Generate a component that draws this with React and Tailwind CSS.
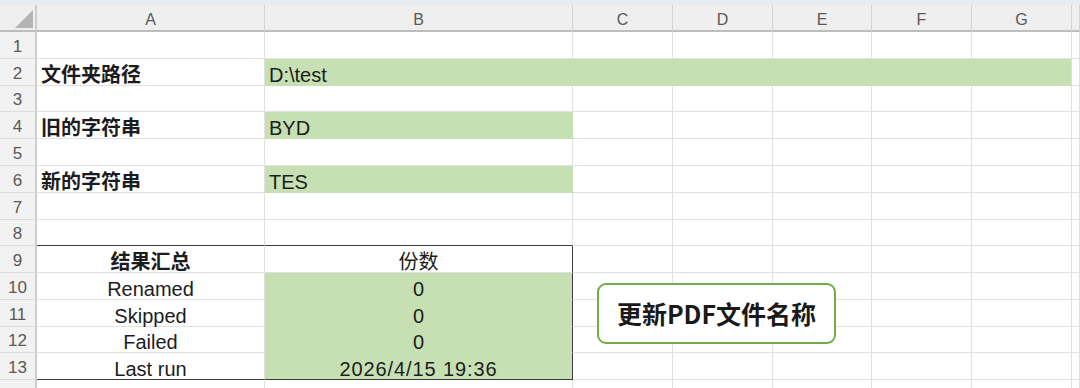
const FONT = { fontFamily: '"Liberation Sans", "Noto Sans CJK SC", sans-serif' };

const COLS = ['A', 'B', 'C', 'D', 'E', 'F', 'G', ''];

const GREEN = 'bg-[#c6e0b4]';

// one entry per sheet row
const rows = [
  { n: 1 },
  { n: 2, a: { text: '文件夹路径', bold: true }, b: { text: 'D:\\test', fill: true, span: 6 } },
  { n: 3 },
  { n: 4, a: { text: '旧的字符串', bold: true }, b: { text: 'BYD', fill: true } },
  { n: 5 },
  { n: 6, a: { text: '新的字符串', bold: true }, b: { text: 'TES', fill: true } },
  { n: 7 },
  { n: 8, top: true },
  { n: 9, table: true, a: { text: '结果汇总', bold: true, center: true }, b: { text: '份数', center: true } },
  { n: 10, table: true, a: { text: 'Renamed', center: true }, b: { text: '0', fill: true, center: true } },
  { n: 11, table: true, a: { text: 'Skipped', center: true }, b: { text: '0', fill: true, center: true } },
  { n: 12, table: true, a: { text: 'Failed', center: true }, b: { text: '0', fill: true, center: true } },
  {
    n: 13,
    table: true,
    bottom: true,
    a: { text: 'Last run', center: true },
    b: { text: '2026/4/15 19:36', fill: true, center: true, wide: true },
  },
  { n: 14, hidden: true },
];

function Cell({ cell = {}, right, bottom, span }) {
  return (
    <div
      className={`flex items-end overflow-visible whitespace-nowrap border-r border-b text-[20px] leading-none text-[#1c1c1c] ${right} ${bottom} ${
        cell.fill ? GREEN : 'bg-white'
      } ${cell.center ? 'justify-center' : 'pl-[4px]'} ${cell.bold ? 'font-bold' : ''} ${
        cell.wide ? 'tracking-[0.9px]' : ''
      } ${span === 6 ? 'col-span-6' : ''}`}
    >
      {cell.text}
    </div>
  );
}

function SheetRow({ row }) {
  const { a, b, table, top, bottom } = row;
  const aBottom = top || bottom ? 'border-b-[#3d3d3d]' : 'border-b-[#e1e1e1]';
  let bRight = 'border-r-[#e1e1e1]';
  if (table) bRight = 'border-r-[#3d3d3d]';
  else if (b && b.fill && !b.span) bRight = 'border-r-[#c6e0b4]';
  let bBottom = 'border-b-[#e1e1e1]';
  if (top || bottom) bBottom = 'border-b-[#3d3d3d]';
  else if (b && b.fill) bBottom = 'border-b-[#c6e0b4]';
  const rest = b && b.span ? COLS.slice(7) : COLS.slice(2);

  return (
    <>
      <div className="flex items-end justify-center border-r-2 border-b border-r-[#cdcdcd] border-b-[#dcdcdc] bg-[#f2f2f2] pb-[3px] text-[17px] leading-none text-[#595959]">
        {row.hidden ? '' : row.n}
      </div>
      <Cell cell={a} right="border-r-[#e1e1e1]" bottom={aBottom} />
      <Cell cell={b} right={bRight} bottom={bBottom} span={b && b.span} />
      {rest.map((c) => (
        <div key={c || 'h'} className="border-r border-b border-r-[#e1e1e1] border-b-[#e1e1e1] bg-white" />
      ))}
    </>
  );
}

export default function App() {
  return (
    <div className="relative h-[388px] w-[1080px] overflow-hidden bg-white" style={FONT}>
      <div className="h-[5px] bg-[#e8ecf0]" />
      <div className="grid grid-cols-[37px_228px_308px_100px_100px_99px_100px_100px_8px] grid-rows-[27px_27px_27px_26px_27px_27px_27px_27px_26px_27px_27px_27px_26px_27px_27px]">
        <div className="flex items-start border-r-2 border-b-2 border-r-[#cdcdcd] border-b-[#bdbdbd] bg-[#efefef] pl-[15px] pt-[5px]">
          <svg width="18" height="18" viewBox="0 0 18 18">
            <polygon points="0,18 18,18 18,0" fill="#b4b4b4" />
          </svg>
        </div>
        {COLS.map((c) => (
          <div
            key={c || 'h'}
            className="flex items-end justify-center border-r border-b-2 border-r-[#d6d6d6] border-b-[#bdbdbd] bg-[#efefef] pb-[2px] text-[16px] leading-none text-[#595959]"
          >
            {c}
          </div>
        ))}
        {rows.map((row) => (
          <SheetRow key={row.n} row={row} />
        ))}
      </div>

      {/* shape button floating over the sheet */}
      <div className="absolute left-[597px] top-[283px] flex h-[61px] w-[239px] items-center justify-center rounded-[9px] border-2 border-[#70ad47] bg-white text-[25px] font-bold text-[#1a1a1a]">
        <span style={{ fontFamily: '"Noto Sans CJK SC", sans-serif' }}>更新PDF文件名称</span>
      </div>
    </div>
  );
}
